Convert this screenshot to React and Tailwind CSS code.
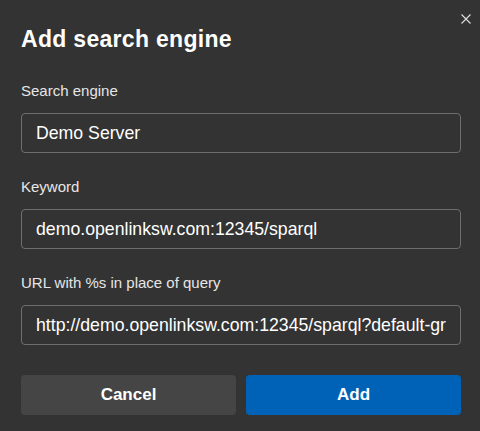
import React from "react";

function Field({ label, value, first }) {
  return (
    <div className={first ? "mt-[28px]" : "mt-[24px]"}>
      <div className="text-[15px] leading-[20px] text-[#e6e6e6]">{label}</div>
      <input
        readOnly
        value={value}
        className="mt-[12px] block w-full h-[40px] rounded-[4px] border border-[#6e6e6e] bg-transparent px-[14px] text-[17.7px] text-white outline-none"
        style={{ fontFamily: '"Liberation Sans", Arial, sans-serif' }}
      />
    </div>
  );
}

export default function App() {
  return (
    <div
      className="relative w-[480px] h-[431px] overflow-hidden bg-[#333333] pl-[21px] pr-[19px] pt-[25px]"
      style={{ fontFamily: '"Liberation Sans", Arial, sans-serif' }}
    >
      <button className="absolute right-[9px] top-[14px] w-[10px] h-[10px] text-[#e0e0e0]" aria-label="Close">
        <svg width="10" height="10" viewBox="0 0 10 10" fill="none" stroke="currentColor" strokeWidth="1.1">
          <path d="M0.5 0.5 L9.5 9.5 M9.5 0.5 L0.5 9.5" />
        </svg>
      </button>
      <h1 className="text-[23px] leading-[28px] font-bold text-white tracking-[0.3px]">Add search engine</h1>
      <Field first label="Search engine" value="Demo Server" />
      <Field label="Keyword" value="demo.openlinksw.com:12345/sparql" />
      <Field
        label="URL with %s in place of query"
        value="http://demo.openlinksw.com:12345/sparql?default-graph-uri=&query=%s"
      />
      <div className="mt-[30px] flex gap-[10px]">
        <button className="flex-1 h-[40px] rounded-[4px] bg-[#454545] text-[17px] font-bold text-white">Cancel</button>
        <button className="flex-1 h-[40px] rounded-[4px] bg-[#0062b6] text-[17px] font-bold text-white">Add</button>
      </div>
    </div>
  );
}
